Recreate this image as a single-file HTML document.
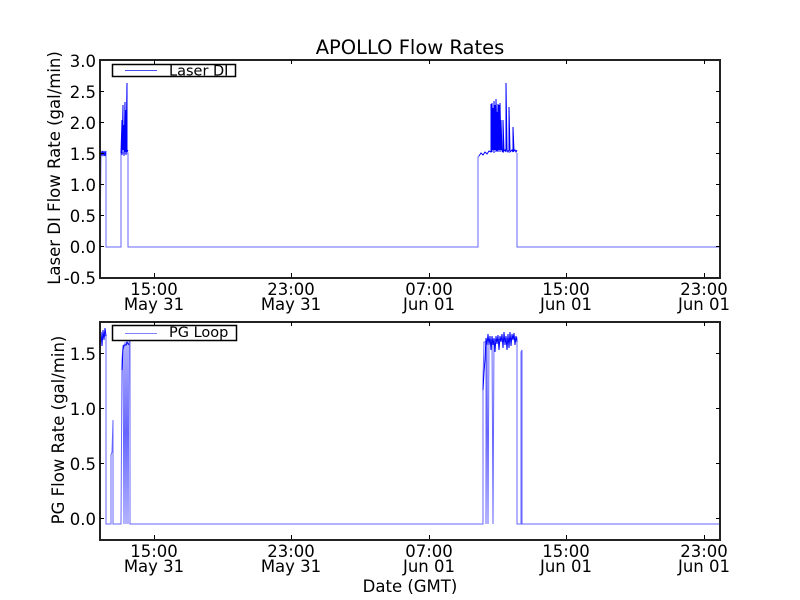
<!DOCTYPE html>
<html><head><meta charset="utf-8"><style>
html,body{margin:0;padding:0;background:#fff;}
svg{display:block;font-family:"DejaVu Sans","Liberation Sans",sans-serif;}
</style></head><body>
<svg width="800" height="600" viewBox="0 0 800 600" xmlns="http://www.w3.org/2000/svg">
<rect width="800" height="600" fill="#fff"/>
<text x="410" y="54" font-size="19.5" text-anchor="middle">APOLLO Flow Rates</text>

<!-- TOP PLOT -->
<g fill="none" stroke="#0000ff" stroke-width="1">
<polyline stroke-opacity="0.6" points="100,247 101,153 102,155 103,151 104,156 105,152 106,153 106,247 121,247 121,153 127,153 128,153 128,247 478,247 478,157 479,156"/>
<polyline stroke-opacity="0.6" points="517,153 517,247 720,247"/>
<polyline points="100,152 101,156 102,151 103,155 104,152 105,156 106,151"/>
<polyline points="121,153 122,120 122,155 123,105 123,150 124,125 124,156 125,102 125,152 126,110 126,155 127,83 127,152 128,150"/>
<polyline points="479,156 481,153 483,155 485,152 487,154 489,151 491,152 491,104 492,152 492,103 493,150 493,108 494,153 494,101 495,150 495,105 496,152 496,99 497,151 497,112 498,152 498,106 499,150 499,105 500,152 500,103 501,150 501,120 502,151 503,152 503,120 504,151 505,150 506,152 506,83 507,150 508,152 509,150 509,107 510,152 511,151 512,150 513,152 513,127 514,151 515,150 516,152 517,150"/>
<polyline points="491,150 491,106 492,104 493,150 494,104 495,149 496,102 497,148 498,104 499,150 500,106"/>
</g>
<rect x="100" y="60" width="620" height="218" fill="none" stroke="#222" stroke-width="2"/>
<g stroke="#000" stroke-width="1">
<line x1="100" y1="91.5" x2="104" y2="91.5"/><line x1="716" y1="91.5" x2="720" y2="91.5"/>
<line x1="100" y1="122.5" x2="104" y2="122.5"/><line x1="716" y1="122.5" x2="720" y2="122.5"/>
<line x1="100" y1="153.5" x2="104" y2="153.5"/><line x1="716" y1="153.5" x2="720" y2="153.5"/>
<line x1="100" y1="184.5" x2="104" y2="184.5"/><line x1="716" y1="184.5" x2="720" y2="184.5"/>
<line x1="100" y1="215.5" x2="104" y2="215.5"/><line x1="716" y1="215.5" x2="720" y2="215.5"/>
<line x1="100" y1="246.5" x2="104" y2="246.5"/><line x1="716" y1="246.5" x2="720" y2="246.5"/>
<line x1="154.5" y1="60" x2="154.5" y2="64"/><line x1="154.5" y1="273" x2="154.5" y2="277"/>
<line x1="291.5" y1="60" x2="291.5" y2="64"/><line x1="291.5" y1="273" x2="291.5" y2="277"/>
<line x1="429.5" y1="60" x2="429.5" y2="64"/><line x1="429.5" y1="273" x2="429.5" y2="277"/>
<line x1="566.5" y1="60" x2="566.5" y2="64"/><line x1="566.5" y1="273" x2="566.5" y2="277"/>
<line x1="704.5" y1="60" x2="704.5" y2="64"/><line x1="704.5" y1="273" x2="704.5" y2="277"/>
</g>
<g font-size="16.5" text-anchor="end">
<text x="96" y="67">3.0</text><text x="96" y="98">2.5</text><text x="96" y="129">2.0</text>
<text x="96" y="160">1.5</text><text x="96" y="191">1.0</text><text x="96" y="222">0.5</text>
<text x="96" y="253">0.0</text><text x="96" y="284">-0.5</text>
</g>
<g font-size="16.5" text-anchor="middle">
<text x="154" y="295">15:00</text><text x="154" y="310">May 31</text>
<text x="291" y="295">23:00</text><text x="291" y="310">May 31</text>
<text x="429" y="295">07:00</text><text x="429" y="310">Jun 01</text>
<text x="566" y="295">15:00</text><text x="566" y="310">Jun 01</text>
<text x="704" y="295">23:00</text><text x="704" y="310">Jun 01</text>
</g>
<text transform="translate(60,168) rotate(-90)" font-size="16.5" text-anchor="middle">Laser DI Flow Rate (gal/min)</text>
<rect x="112.5" y="64.5" width="123" height="12" fill="#fff" stroke="#000" stroke-width="1.5"/>
<line x1="125" y1="70.5" x2="157" y2="70.5" stroke="#0000ff" stroke-opacity="0.7"/>
<text x="169" y="75.5" font-size="14.5">Laser DI</text>

<!-- BOTTOM PLOT -->
<g fill="none" stroke="#0000ff" stroke-width="1">
<polyline stroke-opacity="0.6" points="100,524 100,340 106,335 106,524 111,524 111,455 112,452 113,420 113,524 121,524 122,360 123,345 124,524 125,342 126,524 127,340 128,524 129,342 130,340 130,524 483,524 483,380 484,342 486,342 486,524 487,340 488,524 489,340 492,340 493,524 494,340 516,338 517,338 517,524 521,524 521,352 522,350 522,524 720,524"/>
<polyline points="100,345 101,332 102,346 103,330 104,340 105,328 106,336"/>
<polyline points="483,390 484,372 485,360 486,338 487,345 488,334 489,345 490,336 491,350 492,336 493,345 494,338 495,352 496,336 497,344 498,335 499,350 500,336 501,342 502,334 503,348 504,332 505,345 506,336 507,350 508,334 509,348 510,332 511,346 512,334 513,340 514,333 515,345 516,336 517,342"/>
<polyline points="122,370 123,350 124,345 126,345 127,342 129,345"/>
</g>
<rect x="100" y="322" width="620" height="218" fill="none" stroke="#222" stroke-width="2"/>
<g stroke="#000" stroke-width="1">
<line x1="100" y1="353.5" x2="104" y2="353.5"/><line x1="716" y1="353.5" x2="720" y2="353.5"/>
<line x1="100" y1="408.5" x2="104" y2="408.5"/><line x1="716" y1="408.5" x2="720" y2="408.5"/>
<line x1="100" y1="463.5" x2="104" y2="463.5"/><line x1="716" y1="463.5" x2="720" y2="463.5"/>
<line x1="100" y1="518.5" x2="104" y2="518.5"/><line x1="716" y1="518.5" x2="720" y2="518.5"/>
<line x1="154.5" y1="322" x2="154.5" y2="326"/><line x1="154.5" y1="535" x2="154.5" y2="539"/>
<line x1="291.5" y1="322" x2="291.5" y2="326"/><line x1="291.5" y1="535" x2="291.5" y2="539"/>
<line x1="429.5" y1="322" x2="429.5" y2="326"/><line x1="429.5" y1="535" x2="429.5" y2="539"/>
<line x1="566.5" y1="322" x2="566.5" y2="326"/><line x1="566.5" y1="535" x2="566.5" y2="539"/>
<line x1="704.5" y1="322" x2="704.5" y2="326"/><line x1="704.5" y1="535" x2="704.5" y2="539"/>
</g>
<g font-size="16.5" text-anchor="end">
<text x="96" y="360">1.5</text><text x="96" y="415">1.0</text>
<text x="96" y="470">0.5</text><text x="96" y="525">0.0</text>
</g>
<g font-size="16.5" text-anchor="middle">
<text x="154" y="557">15:00</text><text x="154" y="572">May 31</text>
<text x="291" y="557">23:00</text><text x="291" y="572">May 31</text>
<text x="429" y="557">07:00</text><text x="429" y="572">Jun 01</text>
<text x="566" y="557">15:00</text><text x="566" y="572">Jun 01</text>
<text x="704" y="557">23:00</text><text x="704" y="572">Jun 01</text>
</g>
<text x="410" y="592" font-size="16.5" text-anchor="middle">Date (GMT)</text>
<text transform="translate(64,430) rotate(-90)" font-size="16.5" text-anchor="middle">PG Flow Rate (gal/min)</text>
<rect x="112.5" y="325.5" width="124" height="15" fill="#fff" stroke="#000" stroke-width="1.5"/>
<line x1="125" y1="333.5" x2="157" y2="333.5" stroke="#0000ff" stroke-opacity="0.5"/>
<text x="169" y="337" font-size="14.5">PG Loop</text>
</svg>
</body></html>
